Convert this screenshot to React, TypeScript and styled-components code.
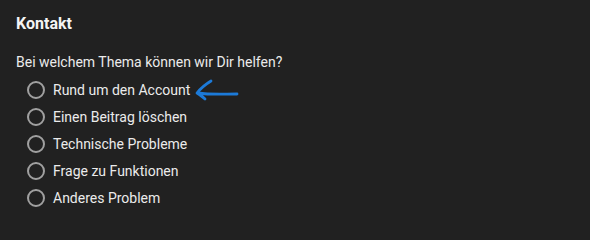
import styled, { createGlobalStyle } from 'styled-components'

const GlobalStyle = createGlobalStyle`
  body {
    margin: 0;
    background: #212121;
    font-family: Roboto, "Noto Sans", sans-serif;
  }
`

const Panel = styled.div`
  width: 590px;
  height: 226px;
  box-sizing: border-box;
  padding: 14px 16px 0;
  background: #212121;
  color: #ebebeb;
`

const Title = styled.h2`
  margin: 0 0 18px;
  font-size: 16px;
  line-height: 20px;
  font-weight: 700;
  color: #f4f4f4;
`

const Question = styled.p`
  margin: 0 0 4px;
  font-size: 14px;
  line-height: 20px;
`

const Options = styled.div`
  display: flex;
  flex-direction: column;
  padding-left: 11px;
`

const Option = styled.label`
  display: flex;
  align-items: center;
  height: 27px;
  font-size: 14px;
  cursor: pointer;
`

const Radio = styled.span`
  width: 18px;
  height: 18px;
  box-sizing: border-box;
  border: 2px solid #a0a0a0;
  border-radius: 50%;
  margin-right: 8px;
  flex-shrink: 0;
`

const Arrow = styled.svg`
  margin-left: 4px;
  margin-top: 1px;
`

const topics = [
  'Rund um den Account',
  'Einen Beitrag löschen',
  'Technische Probleme',
  'Frage zu Funktionen',
  'Anderes Problem',
]

const App = () => {
  return (
    <>
      <GlobalStyle />
      <Panel>
        <Title>Kontakt</Title>
        <Question>Bei welchem Thema können wir Dir helfen?</Question>
        <Options>
          {topics.map((topic, i) => (
            <Option key={topic}>
              <Radio />
              {topic}
              {i === 0 && (
                <Arrow width='46' height='24' viewBox='0 0 46 24'>
                  <path
                    d='M17 3 C12 6 7 10 3 15 C6 17 9 19 11 21 M4 15 C17 17 30 16 43 16'
                    fill='none'
                    stroke='#1c7ad8'
                    strokeWidth='2.8'
                    strokeLinecap='round'
                    strokeLinejoin='round'
                  />
                </Arrow>
              )}
            </Option>
          ))}
        </Options>
      </Panel>
    </>
  )
}

export default App
